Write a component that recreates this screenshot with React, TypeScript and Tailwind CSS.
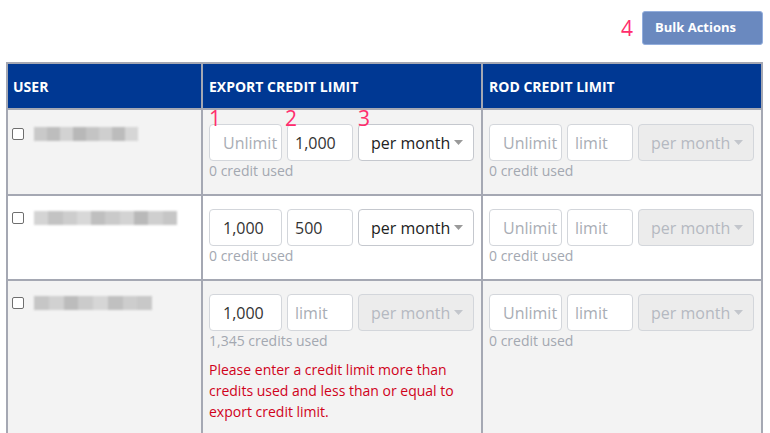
import React from 'react';

type Field = { value?: string; placeholder: string; pad: string; width: string };

interface RowData {
  name: string[];
  nameWidth: number;
  bg: string;
  exportLimit: [Field, Field];
  exportPeriodOn: boolean;
  exportUsed: string;
  rodUsed: string;
  error?: string[];
  top: string;
  checkTop: string;
  marks?: boolean;
}

const field = (placeholder: string, value?: string, first = true): Field => ({
  placeholder,
  value,
  pad: first ? 'pl-[13px]' : 'pl-[7px]',
  width: first ? 'w-[73px]' : 'w-[66px]',
});

const rows: RowData[] = [
  {
    name: ['#c9c9c9', '#bdbdbd', '#d2d2d2', '#b8b8b8', '#c4c4c4', '#cfcfcf', '#bcbcbc', '#d6d6d6'],
    nameWidth: 104,
    bg: 'bg-[#f3f3f3]',
    exportLimit: [field('Unlimit'), field('limit', '1,000', false)],
    exportPeriodOn: true,
    exportUsed: '0 credit used',
    rodUsed: '0 credit used',
    top: 'pt-[14px]',
    checkTop: 'pt-[17px]',
    marks: true,
  },
  {
    name: ['#d4d4d4', '#c3c3c3', '#cdcdcd', '#d8d8d8', '#bfbfbf', '#cacaca', '#d3d3d3', '#b9b9b9', '#cfcfcf', '#c6c6c6'],
    nameWidth: 143,
    bg: 'bg-white',
    exportLimit: [field('Unlimit', '1,000'), field('limit', '500', false)],
    exportPeriodOn: true,
    exportUsed: '0 credit used',
    rodUsed: '0 credit used',
    top: 'pt-[13px]',
    checkTop: 'pt-[15px]',
  },
  {
    name: ['#c6c6c6', '#d1d1d1', '#bcbcbc', '#cbcbcb', '#d6d6d6', '#c0c0c0', '#cdcdcd', '#c8c8c8'],
    nameWidth: 118,
    bg: 'bg-[#f3f3f3]',
    exportLimit: [field('Unlimit', '1,000'), field('limit', undefined, false)],
    exportPeriodOn: false,
    exportUsed: '1,345 credits used',
    rodUsed: '0 credit used',
    error: ['Please enter a credit limit more than', 'credits used and less than or equal to', 'export credit limit.'],
    top: 'pt-[13px]',
    checkTop: 'pt-[15px]',
  },
];

const Input = ({ f }: { f: Field }) => (
  <div
    className={`${f.width} ${f.pad} h-[37px] flex items-center bg-white border border-[#d3d6db] rounded-[4px] overflow-hidden whitespace-nowrap text-[16px]`}
  >
    {f.value ? <span className="text-[#333]">{f.value}</span> : <span className="text-[#a9adb5]">{f.placeholder}</span>}
  </div>
);

const Period = ({ on }: { on: boolean }) => (
  <div
    className={`w-[116px] h-[37px] flex items-center justify-between pl-[12px] pr-[10px] border rounded-[4px] text-[16px] whitespace-nowrap ${
      on ? 'bg-white border-[#c5c8ce] text-[#222]' : 'bg-[#ececec] border-[#d3d6db] text-[#b5b9c1]'
    }`}
  >
    <span>per month</span>
    <svg width="9" height="5" viewBox="0 0 9 5">
      <path d="M0 0h9L4.5 5z" fill={on ? '#9a9a9a' : '#c3c6cc'} />
    </svg>
  </div>
);

const Limits = ({ a, b, on, used, top, marks, error }: { a: Field; b: Field; on: boolean; used: string; top: string; marks?: boolean; error?: string[] }) => (
  <div className={`relative pl-[6px] ${top} pb-[13px]`}>
    {marks && (
      <>
        <span className="absolute left-[6px] top-[-3px] text-[21px] leading-[22px] font-medium text-[#ff2d6d]">1</span>
        <span className="absolute left-[82px] top-[-3px] text-[21px] leading-[22px] font-medium text-[#ff2d6d]">2</span>
        <span className="absolute left-[155px] top-[-3px] text-[21px] leading-[22px] font-medium text-[#ff2d6d]">3</span>
      </>
    )}
    <div className="flex gap-[5px]">
      <Input f={a} />
      <Input f={b} />
      <Period on={on} />
    </div>
    <p className="text-[14px] leading-[20px] text-[#a3a8b1]">{used}</p>
    {error && (
      <div className="mt-[8px] text-[14px] leading-[21px] text-[#d0021b]">
        {error.map(l => (
          <p key={l}>{l}</p>
        ))}
      </div>
    )}
  </div>
);

const BlurName = ({ shades, width }: { shades: string[]; width: number }) => (
  <div className="flex h-[14px] blur-[1px]" style={{ width }}>
    {shades.map((c, i) => (
      <div key={i} className="flex-1" style={{ backgroundColor: c }} />
    ))}
  </div>
);

export default function App() {
  return (
    <div className="w-[770px] h-[433px] overflow-hidden bg-white" style={{ fontFamily: '"Open Sans", "Noto Sans", sans-serif' }}>
      <div className="flex justify-end items-center gap-[9px] pt-[11px] pr-[7px]">
        <span className="text-[21px] leading-none font-medium text-[#ff2d6d]">4</span>
        <button className="w-[121px] h-[34px] pl-[12px] text-left bg-[#6a89bf] border border-[#93aedd] rounded-[3px] text-white text-[13px] font-bold">
          Bulk Actions
        </button>
      </div>

      <div className="mt-[17px] ml-[6px] w-[757px] border-2 border-[#a5a8b3]">
        <div className="grid grid-cols-[195px_280px_1fr] bg-[#003893] text-white text-[14px] font-bold border-b-2 border-[#a5a8b3]">
          <div className="h-[44px] flex items-center pl-[5px] border-r-2 border-[#a5a8b3]">USER</div>
          <div className="h-[44px] flex items-center pl-[6px] border-r-2 border-[#a5a8b3]">EXPORT CREDIT LIMIT</div>
          <div className="h-[44px] flex items-center pl-[6px]">ROD CREDIT LIMIT</div>
        </div>

        {rows.map((r, i) => (
          <div key={i} className={`grid grid-cols-[195px_280px_1fr] ${r.bg} ${i < rows.length - 1 ? 'border-b-2 border-[#a5a8b3]' : ''}`}>
            <div className={`flex items-start gap-[10px] pl-[4px] ${r.checkTop} border-r-2 border-[#a5a8b3]`}>
              <div className="w-[12px] h-[12px] mt-[1px] shrink-0 bg-white border border-[#6f6f6f] rounded-[2px]" />
              <BlurName shades={r.name} width={r.nameWidth} />
            </div>
            <div className="border-r-2 border-[#a5a8b3]">
              <Limits a={r.exportLimit[0]} b={r.exportLimit[1]} on={r.exportPeriodOn} used={r.exportUsed} top={r.top} marks={r.marks} error={r.error} />
            </div>
            <div>
              <Limits a={field('Unlimit')} b={field('limit', undefined, false)} on={false} used={r.rodUsed} top={r.top} />
            </div>
          </div>
        ))}
      </div>
    </div>
  );
}
